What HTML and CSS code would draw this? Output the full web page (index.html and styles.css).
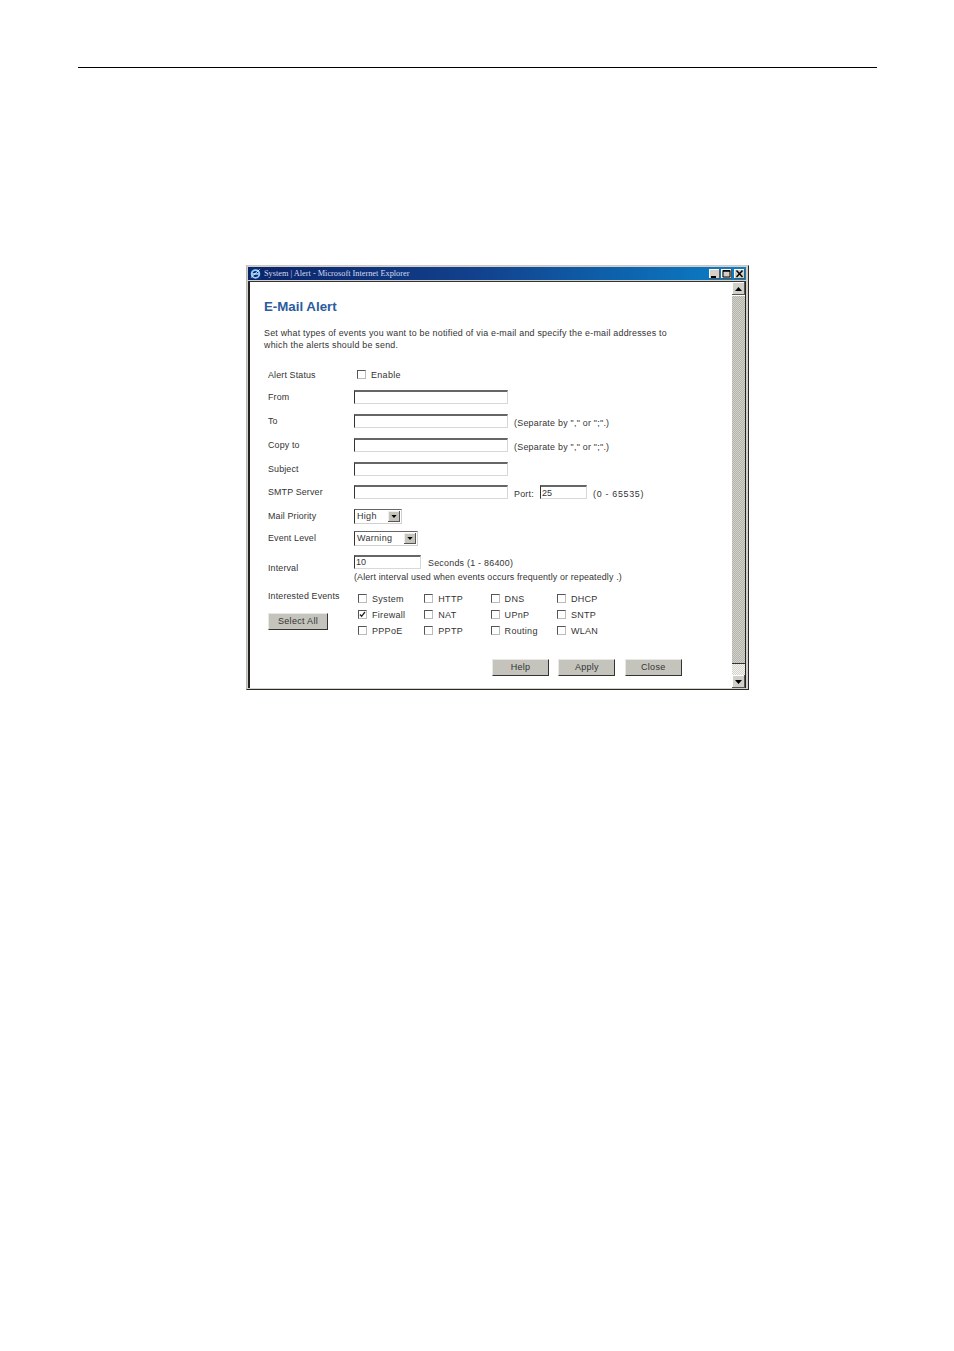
FILE: index.html
```html
<!DOCTYPE html>
<html lang="en">
<head>
<meta charset="utf-8">
<title>E-Mail Alert</title>
<link rel="stylesheet" href="styles.css">
</head>
<body>
<hr class="rule">
<div class="window">
  <div class="titlebar">
    <svg class="ie" viewBox="0 0 12 12"><rect width="12" height="12" fill="#0b2a78"/><circle cx="6" cy="6.5" r="4.2" fill="none" stroke="#8fd0f5" stroke-width="2"/><path d="M2.5 6.5h7" stroke="#e8f6ff" stroke-width="1.4"/><path d="M1 10.5 10.5 1.5" stroke="#dfeeff" stroke-width="1"/></svg>
    <span class="title-text">System | Alert - Microsoft Internet Explorer</span>
    <span class="win-btns">
      <span class="win-btn"><svg viewBox="0 0 11 10"><path d="M2 8h5" stroke="#000" stroke-width="2"/></svg></span>
      <span class="win-btn"><svg viewBox="0 0 11 10"><path d="M2 1.5h7v6.5H2z" fill="none" stroke="#000"/><path d="M2 2h7" stroke="#000" stroke-width="1.5"/></svg></span>
      <span class="win-btn close"><svg viewBox="0 0 11 10"><path d="M2.5 1.5l6 6.5M8.5 1.5l-6 6.5" stroke="#000" stroke-width="1.5"/></svg></span>
    </span>
  </div>
  <div class="client">
    <main class="content">
      <h1 class="heading">E-Mail Alert</h1>
      <p class="intro">Set what types of events you want to be notified of via e-mail and specify the e-mail addresses to<br>which the alerts should be send.</p>
      <div class="form">
        <div class="row r-status"><span class="label">Alert Status</span><span class="field"><label class="check first"><input type="checkbox">Enable</label></span></div>
        <div class="row r-std"><span class="label">From</span><span class="field"><input class="text wide" type="text"></span></div>
        <div class="row r-std"><span class="label">To</span><span class="field"><input class="text wide" type="text"><span class="hint">(Separate by "," or ";".)</span></span></div>
        <div class="row r-std"><span class="label">Copy to</span><span class="field"><input class="text wide" type="text"><span class="hint">(Separate by "," or ";".)</span></span></div>
        <div class="row r-std"><span class="label">Subject</span><span class="field"><input class="text wide" type="text"></span></div>
        <div class="row r-smtp"><span class="label">SMTP Server</span><span class="field"><input class="text wide" type="text"><span class="hint">Port:</span><input class="text port" type="text" value="25"><span class="hint range">(0 - 65535)</span></span></div>
        <div class="row r-mail"><span class="label">Mail Priority</span><span class="field"><span class="select s-high">High<span class="arrow"><svg viewBox="0 0 7 4"><path d="M0 0h7L3.5 4z"/></svg></span></span></span></div>
        <div class="row r-event"><span class="label">Event Level</span><span class="field"><span class="select s-warn">Warning<span class="arrow"><svg viewBox="0 0 7 4"><path d="M0 0h7L3.5 4z"/></svg></span></span></span></div>
        <div class="row r-interval"><span class="label">Interval</span>
          <span class="field stack">
            <span class="line"><input class="text short" type="text" value="10"><span class="hint seconds">Seconds (1 - 86400)</span></span>
            <span class="note">(Alert interval used when events occurs frequently or repeatedly .)</span>
          </span>
        </div>
        <div class="row r-events">
          <div class="ev-left"><span class="label">Interested Events</span><button class="btn select-all" type="button">Select All</button></div>
          <div class="ev-grid">
            <label class="check"><input type="checkbox">System</label>
            <label class="check"><input type="checkbox">HTTP</label>
            <label class="check"><input type="checkbox">DNS</label>
            <label class="check"><input type="checkbox">DHCP</label>
            <label class="check"><input type="checkbox" checked>Firewall</label>
            <label class="check"><input type="checkbox">NAT</label>
            <label class="check"><input type="checkbox">UPnP</label>
            <label class="check"><input type="checkbox">SNTP</label>
            <label class="check"><input type="checkbox">PPPoE</label>
            <label class="check"><input type="checkbox">PPTP</label>
            <label class="check"><input type="checkbox">Routing</label>
            <label class="check"><input type="checkbox">WLAN</label>
          </div>
        </div>
      </div>
      <div class="actions">
        <button class="btn act" type="button">Help</button>
        <button class="btn act" type="button">Apply</button>
        <button class="btn act" type="button">Close</button>
      </div>
    </main>
    <div class="scrollbar">
      <span class="sb-btn"><svg viewBox="0 0 7 4"><path d="M0 4h7L3.5 0z"/></svg></span>
      <span class="sb-thumb"></span>
      <span class="sb-track"></span>
      <span class="sb-btn"><svg viewBox="0 0 7 4"><path d="M0 0h7L3.5 4z"/></svg></span>
    </div>
  </div>
</div>
</body>
</html>
```
FILE: styles.css
```css
* { box-sizing: border-box; }
html, body { margin: 0; padding: 0; background: #fff; }
body { width: 954px; height: 1351px; overflow: hidden; font-family: "Liberation Sans", Arial, sans-serif; color: #333; font-size: 9px; }

.rule { margin: 67px 77px 0 78px; height: 1px; border: 0; background: #000; }

.window {
  width: 503px; height: 425px; margin: 197px 0 0 246px;
  background: #d4d0c8;
  border: 1px solid; border-color: #c8c8c4 #2a2a2a #2a2a2a #b8b8b4;
  padding: 1px 2px 1px 1px;
  display: flex; flex-direction: column;
}
.titlebar {
  height: 13px; flex: none; display: flex; align-items: center; padding: 0 1px 0 2px;
  background: linear-gradient(90deg, #0a246a 0%, #12408c 45%, #0a80c8 100%);
}
.ie { width: 11px; height: 11px; flex: none; }
.title-text { margin-left: 3px; font-family: "Liberation Serif", serif; font-size: 8.3px; color: #d8dcec; white-space: nowrap; }
.win-btns { margin-left: auto; display: flex; gap: 1px; }
.win-btn { width: 11px; height: 10px; background: #d4d0c8; display: block; box-shadow: inset -1px -1px 0 #555, inset 1px 1px 0 #fff; }
.win-btn.close { margin-left: 1px; }
.win-btn svg { display: block; width: 11px; height: 10px; }

.client { flex: 1; margin-top: 1px; background: #fff; border: 1px solid #1e1e1e; border-width: 1px 0 0 2px; border-color: #333 #fff #fff #222; display: flex; min-height: 0; }
.content { flex: 1; padding: 17px 0 0 14px; min-width: 0; }
.heading { margin: 0; height: 16px; font-size: 13.3px; line-height: 16px; font-weight: bold; color: #2a5c9e; }
.intro { margin: 12px 0 0; font-size: 8.9px; line-height: 12px; letter-spacing: .23px; white-space: nowrap; }

.form { margin: 14px 0 0 4px; }
.row { display: flex; align-items: center; }
.label { width: 86px; flex: none; font-size: 8.9px; letter-spacing: .15px; white-space: nowrap; }
.field { display: flex; align-items: center; }
.r-status { height: 20px; }
.r-std { height: 24px; }
.r-smtp { height: 22px; }
.r-mail { height: 26px; }
.r-event { height: 18px; }
.r-interval { height: 40px; margin-top: 1px; }
.stack { flex-direction: column; align-items: flex-start; }
.line { display: flex; align-items: center; height: 15px; }
.note { margin-top: 3px; font-size: 8.9px; letter-spacing: .14px; white-space: nowrap; }
.hint { margin: 3px 0 0 6px; font-size: 8.9px; letter-spacing: .25px; white-space: nowrap; }
.seconds { margin-left: 7px; }
.range { letter-spacing: .7px; }

.text { display: block; height: 14px; padding: 0 0 0 1px; border: 1px solid; border-color: #666 #d8d8d8 #d8d8d8 #333; border-top-width: 2px; background: #fff; font: 9px "Liberation Sans", Arial, sans-serif; color: #333; outline: 0; }
.wide { width: 154px; }
.port { width: 47px; margin-left: 6px; }
.short { width: 67px; }
.select { display: flex; align-items: center; justify-content: space-between; height: 15px; padding: 0 1px 0 2px; border: 1px solid; border-color: #666 #d0d0d0 #d0d0d0 #333; font-size: 9px; letter-spacing: .3px; }
.s-high { width: 48px; }
.s-warn { width: 64px; }
.arrow { width: 12px; height: 11px; background: #c4c4bc; display: flex; align-items: center; justify-content: center; box-shadow: inset -1px -1px 0 #555, inset 1px 1px 0 #eee; }
.arrow svg { width: 6px; height: 3px; display: block; }

.check { display: flex; align-items: center; font-size: 9px; letter-spacing: .3px; white-space: nowrap; }
.check input { appearance: none; -webkit-appearance: none; margin: 0 5px 0 0; flex: none; width: 9px; height: 9px; border: 1px solid; border-color: #555 #bbb #bbb #555; background: #fff; position: relative; top: -1px; }
.check input:checked { background: #fff url("data:image/svg+xml,%3Csvg xmlns='http://www.w3.org/2000/svg' viewBox='0 0 7 7'%3E%3Cpath d='M1 3.5l1.6 1.8L6 1' fill='none' stroke='%23222' stroke-width='1.3'/%3E%3C/svg%3E") center/7px no-repeat; }
.check.first { margin-left: 3px; }

.r-events { align-items: flex-start; margin-top: 1px; }
.ev-left { width: 90px; flex: none; display: flex; flex-direction: column; align-items: flex-start; }
.ev-left .label { height: 12px; line-height: 12px; margin-top: 1px; }
.ev-grid { display: grid; grid-template-columns: repeat(4, 66.3px); grid-auto-rows: 16px; margin-top: 2px; }

.btn { display: block; padding: 0 0 2px; background: #c4c4bc; border: 1px solid; border-color: #e8e8e4 #333 #333 #e8e8e4; font: 9px "Liberation Sans", Arial, sans-serif; letter-spacing: .3px; color: #333; }
.select-all { width: 60px; height: 17px; margin-top: 11px; }
.actions { display: flex; gap: 9.4px; margin: 20px 0 0 228px; }
.act { width: 57px; height: 17px; }

.scrollbar { width: 14px; flex: none; display: flex; flex-direction: column; border-right: 1px solid #222; }
.sb-btn { height: 13px; flex: none; background: #d0d0c8; display: flex; align-items: center; justify-content: center; box-shadow: inset -1px -1px 0 #555, inset 1px 1px 0 #fff; }
.sb-btn svg { width: 7px; height: 4px; display: block; }
.sb-thumb { flex: 1; background: repeating-conic-gradient(#b4b4ac 0 25%, #d2d2ca 0 50%) 0 0 / 2px 2px; border-bottom: 1px solid #333; margin-top: 1px; }
.sb-track { height: 11px; flex: none; background: repeating-conic-gradient(#d4d4cc 0 25%, #f4f4ee 0 50%) 0 0 / 2px 2px; }
```
